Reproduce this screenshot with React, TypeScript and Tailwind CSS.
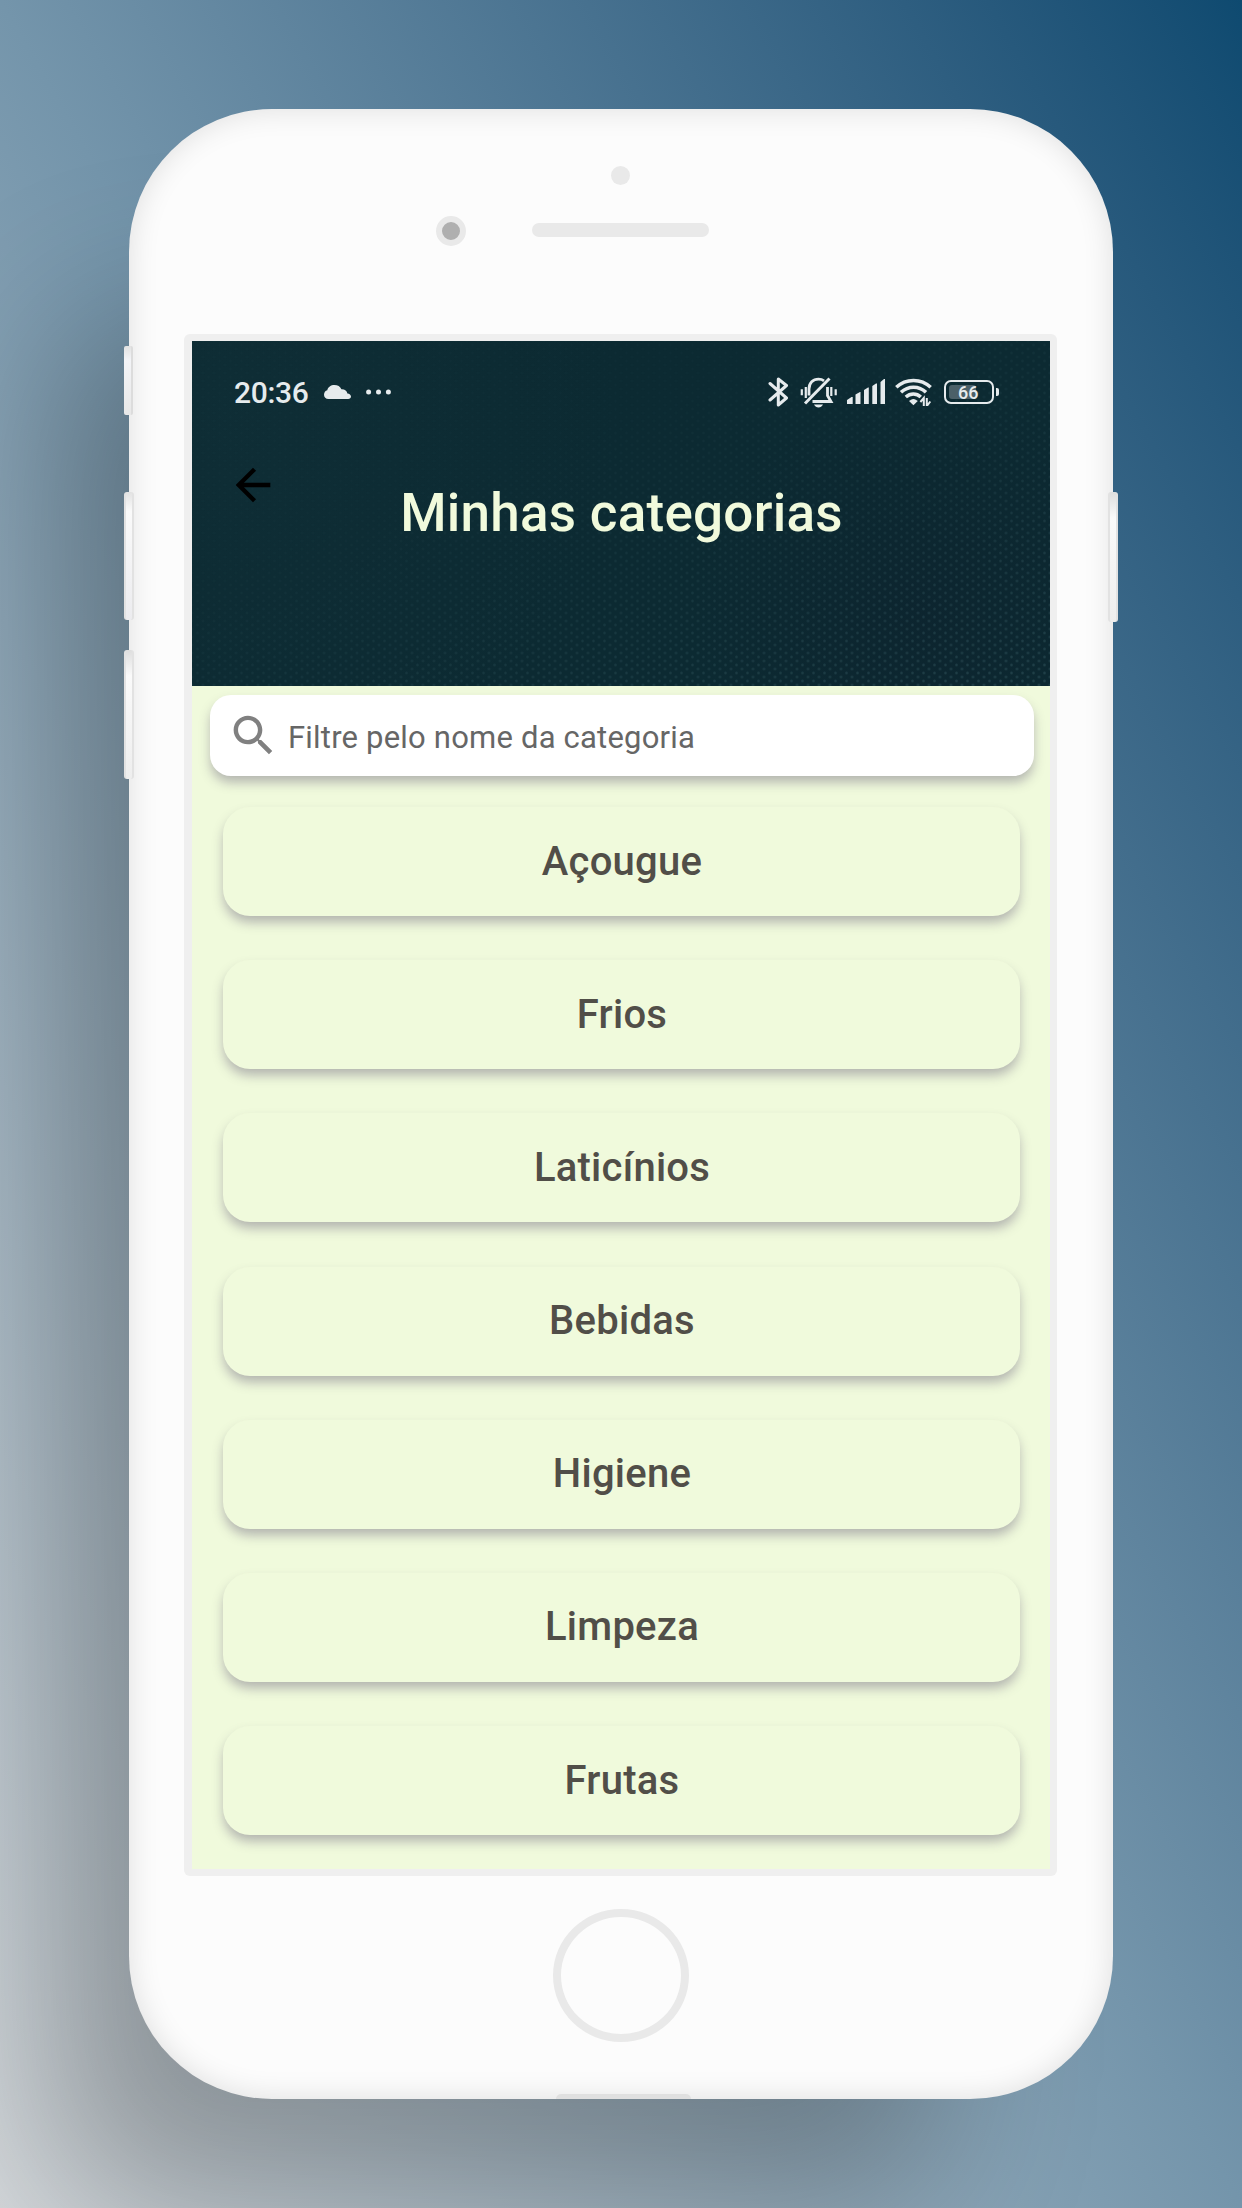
const categories = ["Açougue", "Frios", "Laticínios", "Bebidas", "Higiene", "Limpeza", "Frutas"];

function StatusBar() {
  return (
    <div className="flex h-[101px] items-center pl-[42px] text-[#e6ebed]">
      <span className="w-[90px] pt-[2px] text-[30px] font-medium leading-none tracking-[-0.3px]">20:36</span>
      <svg className="h-[14px] w-[27px]" viewBox="0 0 27 14" fill="currentColor">
        <path d="M4.500 14C1.800 14 0 12.300 0 9.800 0 7.500 1.300 5.800 3.300 5.300 3.900 2 6.900 0 10.400 0c3.300 0 5.900 1.500 7 4.300 3.300-.2 5.600 1.600 6 4.300C25.500 8.800 27 10 27 11.600 27 13 25.800 14 24.200 14Z" />
      </svg>
      <svg className="ml-[15px] h-[6px] w-[25px]" viewBox="0 0 25 6" fill="currentColor">
        <circle cx="2.600" cy="3" r="2.500" />
        <circle cx="12.500" cy="3" r="2.500" />
        <circle cx="22.400" cy="3" r="2.500" />
      </svg>
      <svg className="ml-[377px] h-[32px] w-[21px]" viewBox="0 0 21 32" fill="none" stroke="currentColor" strokeWidth="3" strokeLinejoin="round" strokeLinecap="round">
        <path d="M2 7.500 18.500 22 10.300 29V3L18.500 9.500 2 24" />
      </svg>
      <svg className="ml-[11px] h-[32px] w-[37px]" viewBox="0 0 37 32" fill="none" stroke="currentColor" strokeWidth="2.800">
        <path d="M9 19.500V13C9 7 13 3.200 18.500 3.200c2.200 0 4 .5 5.500 1.600M27.500 11v8.500L31 25.500H12.500" />
        <path d="M5 27.500 29.500 2.500" strokeWidth="3" />
        <path d="M5.800 11v11M31.300 11v9" strokeWidth="2.200" />
        <path d="M1.800 13.200v6M35.700 13.200v6" strokeWidth="2.200" />
        <path d="M14 28.500h9c-1 2-2.600 3-4.500 3s-3.500-1-4.500-3Z" fill="currentColor" stroke="none" />
      </svg>
      <svg className="ml-[10px] h-[25px] w-[38px]" viewBox="0 0 38 25" fill="currentColor">
        <path d="M0 25v-4l4.500-3H5.700v7ZM8.500 25V15.500L13 13h.5v12ZM17 25V11L21 8.500h.8V25ZM25.300 25V7L29 4.500h1V25ZM33.500 25V3L37 0h1v25Z" />
      </svg>
      <svg className="ml-[10px] h-[28px] w-[37px]" viewBox="0 0 37 28" fill="none" stroke="currentColor" strokeWidth="3.500">
        <path d="M1.300 9.300C11 .1 26 .1 35.700 9.300" />
        <path d="M6 14.300c7.300-6.800 18-6.800 25 0" />
        <path d="M10.800 19c4.500-4 10.700-4 15 0" />
        <path d="m14 23 2-1.300c1.500-.8 3.300-.8 4.800 0l2 1.300-4.400 4.300Z" fill="currentColor" stroke="none" />
        <path d="M28.800 28v-8l-3.400 4M31.800 20v8l3.500-4.500" strokeWidth="2" />
      </svg>
      <div className="ml-[12px] flex h-[24px] w-[50px] items-center rounded-[7px] border-[2.500px] border-current p-[3px]">
        <div className="relative h-[14px] w-[27px] rounded-[3px] bg-[#4b6068]">
          <span className="absolute left-[9px] top-[-1px] text-[18px] font-medium leading-[18px]">66</span>
        </div>
      </div>
      <div className="ml-[1.500px] h-[8px] w-[3px] rounded-r-[2px] bg-current" />
    </div>
  );
}

function Header() {
  return (
    <header className="relative h-[345px] bg-[#0c2a32]">
      <div className="pointer-events-none absolute inset-0 bg-[radial-gradient(circle_at_5%_25%,rgba(20,52,60,0.350),transparent_45%),radial-gradient(circle_at_85%_80%,rgba(14,28,42,0.350),transparent_30%)]" />
      <div className="pointer-events-none absolute inset-0 bg-[radial-gradient(circle,rgba(75,115,122,0.320)_0.700px,transparent_2px),radial-gradient(circle,rgba(75,115,122,0.320)_0.700px,transparent_2px)] bg-[length:11px_8px] bg-[position:0_0,5.500px_4px] [mask-image:linear-gradient(160deg,rgba(0,0,0,0.120)_35%,black)]" />
      <div className="relative">
        <StatusBar />
        <svg className="ml-[35px] mt-[17px] h-[52px] w-[52px]" viewBox="0 0 24 24" fill="#000">
          <path d="M20 11H7.830l5.590-5.590L12 4l-8 8 8 8 1.410-1.410L7.830 13H20v-2z" />
        </svg>
        <h1 className="-mt-[30px] pl-[1px] text-center text-[53px] font-medium leading-[64px] tracking-[0.250px] text-[#f1fadc]">Minhas categorias</h1>
      </div>
    </header>
  );
}

function Phone() {
  return (
    <div className="relative h-[1990px] w-[984px] rounded-[143px] bg-[#fcfcfc] shadow-[-126px_156px_160px_-50px_rgba(0,0,0,0.260)]">
      <div className="pointer-events-none absolute inset-0 rounded-[143px] shadow-[inset_0_0_30px_rgba(0,0,0,0.120)]" />
      <div className="absolute bottom-0 left-[427px] h-[5px] w-[135px] rounded-t-[14px] bg-[#e0e0e0]" />
      <div className="absolute -left-[5px] top-[237px] h-[69px] w-[9px] rounded-[2px] border-r-2 border-[#dcdcdc] bg-linear-to-b from-[#e2e2e2] via-[#f3f4f7] via-20% to-[#e8e8e8]" />
      <div className="absolute -left-[5px] top-[383px] h-[128px] w-[10px] rounded-[3px] border-x-2 border-[#e2e2e2] bg-linear-to-b from-[#e2e2e2] via-[#fafafa] via-15% to-[#ececef]" />
      <div className="absolute -left-[5px] top-[541px] h-[129px] w-[10px] rounded-[3px] border-x-2 border-[#e2e2e2] bg-linear-to-b from-[#dedede] via-[#fafafa] via-20% to-[#eeeeee]" />
      <div className="absolute -right-[5px] top-[383px] h-[130px] w-[10px] rounded-[3px] border-x-2 border-[#e2e2e2] bg-linear-to-b from-[#dedede] via-[#fafafa] via-20% to-[#eeeeee]" />

      <div className="flex h-[225px] flex-col pt-[57px]">
        <div className="ml-[482px] size-[19px] rounded-full bg-[#e9e9e9]" />
        <div className="ml-[306.500px] mt-[31px] flex items-center">
          <div className="size-[30px] rounded-full border-[6px] border-[#e9e9e9] bg-[#afafaf]" />
          <div className="-mt-[3px] ml-[66.500px] h-[14px] w-[177px] rounded-full bg-[#e9e9e9]" />
        </div>
      </div>

      <div className="ml-[55px] h-[1542px] w-[873px] rounded-[6px] bg-[#efefef] pl-[8px] pt-[7px]">
        <main className="h-[1528px] w-[858px] overflow-hidden bg-[#f0fadc]">
          <Header />
          <label className="ml-[18px] mt-[9px] flex h-[81px] w-[824px] items-center rounded-[21px] bg-white pl-[17px] shadow-[0_7px_12px_-1px_rgba(60,45,90,0.350)]">
            <svg className="-mt-[1px] size-[53px]" viewBox="0 0 24 24" fill="#808080">
              <path d="M15.500 14h-.79l-.28-.27C15.410 12.590 16 11.110 16 9.500 16 5.910 13.090 3 9.500 3S3 5.910 3 9.500 5.910 16 9.500 16c1.610 0 3.090-.59 4.230-1.570l.27.280v.79l5 4.990L20.490 19l-4.990-5zm-6 0C7.010 14 5 11.990 5 9.500S7.010 5 9.500 5 14 7.010 14 9.500 11.990 14 9.500 14z" />
            </svg>
            <input
              className="ml-[8px] w-[600px] pt-[6px] text-[31px] tracking-[0.200px] outline-none placeholder:text-[#666666] placeholder:opacity-100"
              placeholder="Filtre pelo nome da categoria"
            />
          </label>
          <ul className="ml-[1px] mt-[31px] flex flex-col items-center gap-[44.200px]">
            {categories.map((name) => (
              <li
                key={name}
                className="flex h-[109px] w-[797px] shrink-0 items-center justify-center rounded-[27px] bg-[#f0fadc] pl-[1px] text-[40px] font-medium tracking-[0.250px] text-[#514e48] shadow-[0_7px_12px_-1px_rgba(60,45,90,0.350)]"
              >
                {name}
              </li>
            ))}
          </ul>
        </main>
      </div>

      <div className="ml-[423.500px] mt-[33px] h-[133px] w-[136px] rounded-[50%] border-[8.500px] border-[#e9e9e9]" />
    </div>
  );
}

export default function App() {
  return (
    <div className="h-[2208px] w-[1242px] overflow-hidden bg-linear-to-tr from-[#d3d7da] via-[#7495ab] to-[#0e4a70] pl-[129px] pt-[109px] font-['Roboto',sans-serif]">
      <Phone />
    </div>
  );
}
